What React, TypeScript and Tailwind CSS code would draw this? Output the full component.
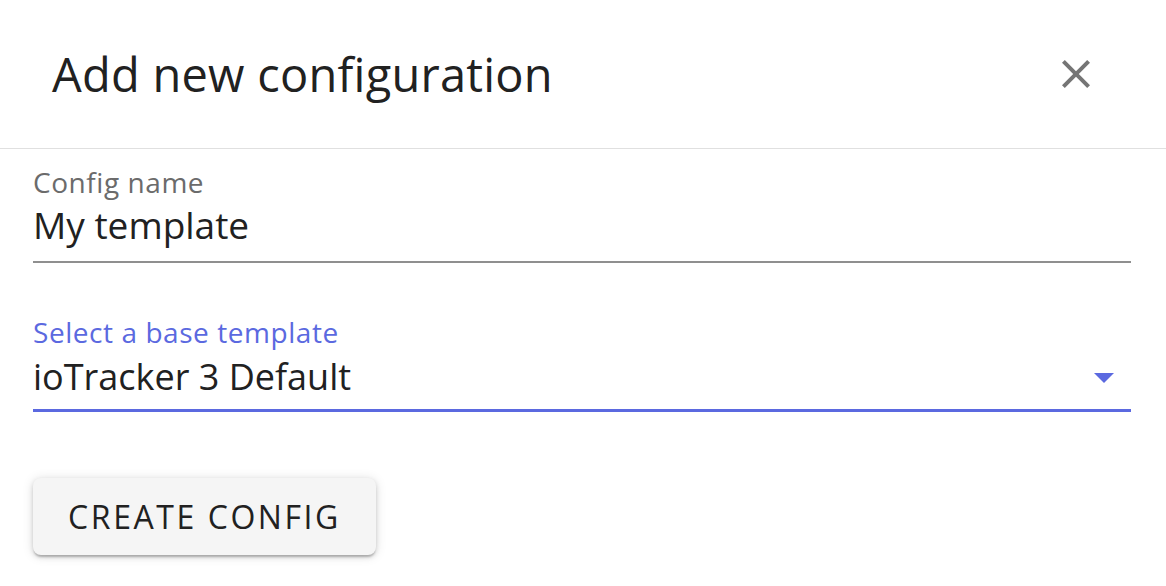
const font = { fontFamily: '"Open Sans", "Noto Sans", sans-serif' }

export default function App() {
  return (
    <div className="w-[1166px] h-[586px] bg-white overflow-hidden text-[#212121]" style={font}>
      <div className="h-[148px] flex items-center justify-between pl-[52px] pr-[66px]">
        <h2 className="text-[47px] font-medium leading-none tracking-[0.005em]">Add new configuration</h2>
        <CloseIcon />
      </div>
      <div className="h-px bg-[#e0e0e0]" />

      <div className="pl-[33px] pr-[35px]">
        <div className="mt-[13px] h-[40px] leading-[40px] text-[28px] tracking-[0.02em] text-[#6b6b6b]">Config name</div>
        <div className="h-[46px] leading-[46px] text-[37px]">My template</div>
        <div className="mt-[13px] h-[2px] bg-[#8f8f8f]" />

        <div className="mt-[49px] h-[40px] leading-[40px] text-[28px] tracking-[0.02em] text-[#5b69e0]">Select a base template</div>
        <div className="mt-[2px] h-[46px] flex items-center justify-between pr-[16px]">
          <span className="leading-[46px] text-[36px]">ioTracker 3 Default</span>
          <svg width="22" height="12" viewBox="0 0 22 12" className="mt-[2px]">
            <path d="M1 1h20L11 11z" fill="#5b69e0" />
          </svg>
        </div>
        <div className="mt-[9px] h-[3px] bg-[#5b69e0]" />

        <button className="mt-[66px] w-[343px] h-[77px] rounded-[8px] bg-[#f5f5f5] text-[32px] font-medium tracking-[0.08em] text-[#212121] shadow-[0_3px_2px_-1px_rgba(0,0,0,0.2),0_2px_5px_0_rgba(0,0,0,0.14),0_1px_12px_0_rgba(0,0,0,0.12)]">
          CREATE CONFIG
        </button>
      </div>
    </div>
  )
}

function CloseIcon() {
  return (
    <svg width="48" height="48" viewBox="0 0 24 24" fill="#757575">
      <path d="M19 6.41 17.59 5 12 10.59 6.41 5 5 6.41 10.59 12 5 17.59 6.41 19 12 13.41 17.59 19 19 17.59 13.41 12z" />
    </svg>
  )
}
